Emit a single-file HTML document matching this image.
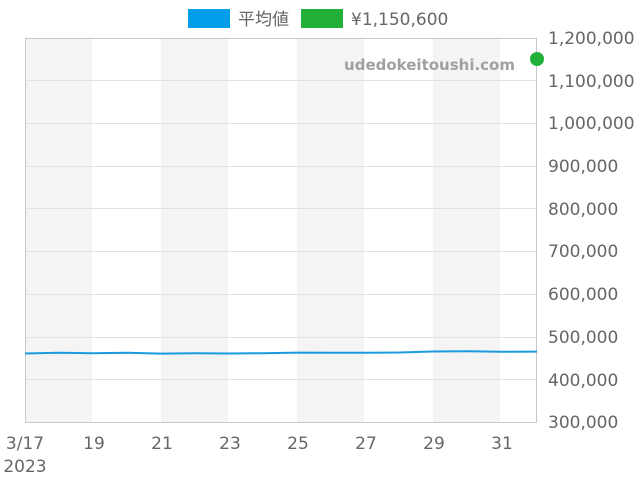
<!DOCTYPE html>
<html><head><meta charset="utf-8"><style>
body{margin:0;width:640px;height:480px;background:#fff;overflow:hidden;font-family:"DejaVu Sans","Liberation Sans","Noto Sans CJK JP",sans-serif;}
</style></head><body>
<svg width="640" height="480" xmlns="http://www.w3.org/2000/svg" font-family="DejaVu Sans, Liberation Sans, Noto Sans CJK JP, sans-serif">
<rect x="25" y="38" width="67" height="384" fill="#f4f4f4"/>
<rect x="161" y="38" width="67" height="384" fill="#f4f4f4"/>
<rect x="297" y="38" width="67" height="384" fill="#f4f4f4"/>
<rect x="433" y="38" width="67" height="384" fill="#f4f4f4"/>
<g stroke="#e2e2e2" stroke-width="1">
<line x1="25" y1="80.5" x2="537" y2="80.5"/><line x1="25" y1="123.5" x2="537" y2="123.5"/>
<line x1="25" y1="166.5" x2="537" y2="166.5"/><line x1="25" y1="208.5" x2="537" y2="208.5"/>
<line x1="25" y1="251.5" x2="537" y2="251.5"/><line x1="25" y1="294.5" x2="537" y2="294.5"/>
<line x1="25" y1="337.5" x2="537" y2="337.5"/><line x1="25" y1="379.5" x2="537" y2="379.5"/>
</g>
<rect x="25.5" y="38.5" width="511" height="384" fill="none" stroke="#c8c8c8"/>
<text x="515" y="70" text-anchor="end" font-size="15" font-weight="bold" fill="#a0a0a0">udedokeitoushi.com</text>
<polyline fill="none" stroke="#1a9be0" stroke-width="2" points="25,353.5 59,352.8 93,353.2 127,352.8 161,353.6 195,353.3 229,353.5 263,353.2 297,352.6 331,352.8 365,352.7 399,352.5 433,351.5 467,351.3 501,351.8 537,351.6"/>
<circle cx="537" cy="59" r="7" fill="#22b03a"/>
<rect x="188" y="9" width="42" height="19" fill="#009ee8"/>
<text x="238" y="25" font-size="17" fill="#666">平均値</text>
<rect x="301" y="9" width="42" height="19" fill="#22b03a"/>
<text x="351" y="25" font-size="17" fill="#666">¥1,150,600</text>
<g font-size="17" fill="#666">
<text x="548" y="44">1,200,000</text><text x="548" y="87">1,100,000</text>
<text x="548" y="129">1,000,000</text><text x="548" y="172">900,000</text>
<text x="548" y="215">800,000</text><text x="548" y="257">700,000</text>
<text x="548" y="300">600,000</text><text x="548" y="343">500,000</text>
<text x="548" y="386">400,000</text><text x="548" y="428">300,000</text>
</g>
<g font-size="17" fill="#666" text-anchor="middle">
<text x="25" y="449">3/17</text><text x="25" y="472">2023</text>
<text x="94" y="449">19</text><text x="162" y="449">21</text><text x="230" y="449">23</text>
<text x="298" y="449">25</text><text x="366" y="449">27</text><text x="434" y="449">29</text><text x="502" y="449">31</text>
</g>
</svg>
</body></html>
